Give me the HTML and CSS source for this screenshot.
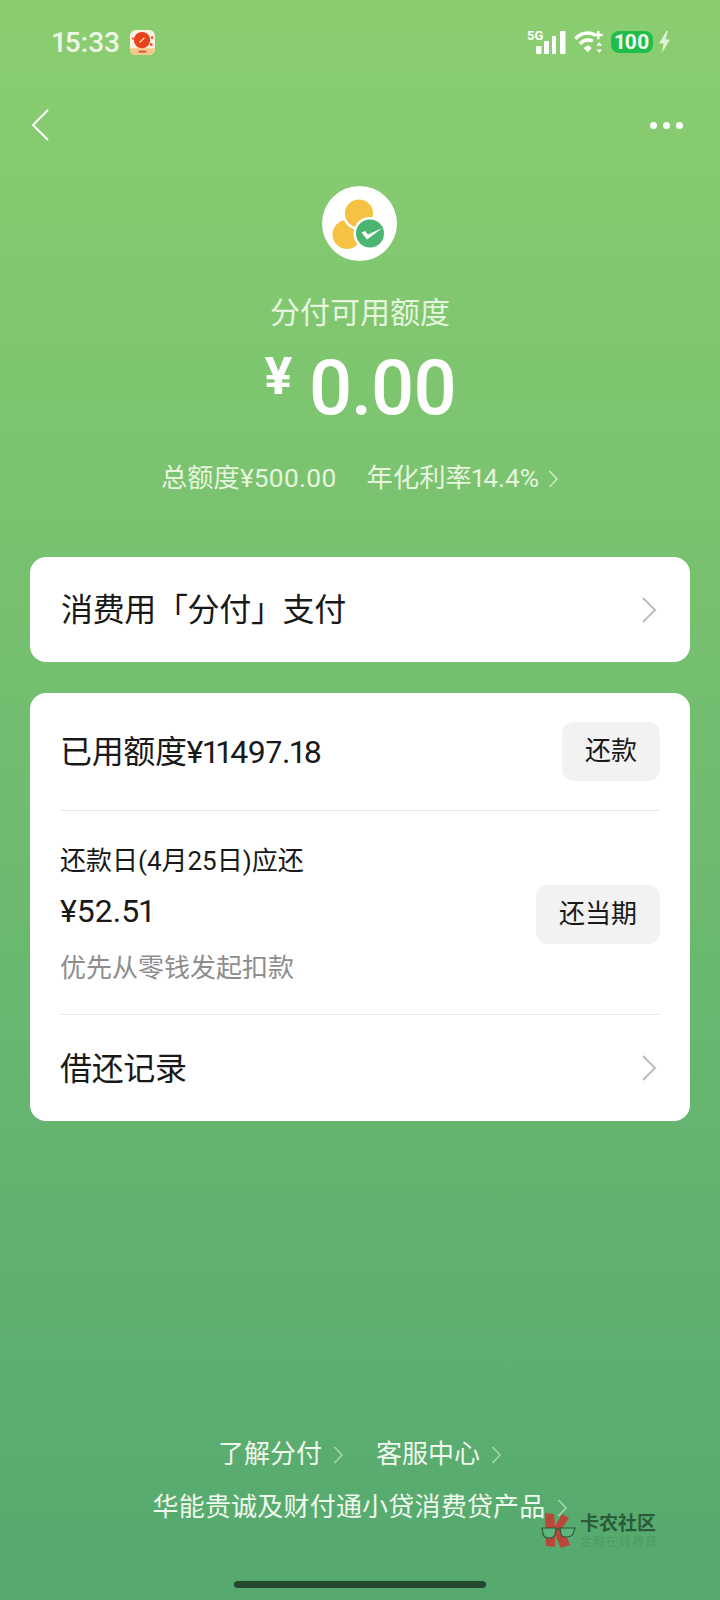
FILE: index.html
```html
<!DOCTYPE html>
<html lang="zh-CN">
<head>
    <meta charset="UTF-8">
    <meta name="viewport" content="width=device-width, initial-scale=1.0">
    <title>分付</title>
    <link rel="stylesheet" href="styles.css">
</head>

<body>
    <div class="page">
        <div class="statusbar">
            <div class="status-left">
                <span class="time">15:33</span>
                <svg class="appicon" width="25" height="25" viewBox="0 0 26 26">
                    <rect width="26" height="26" rx="6" fill="#fdf3e4"/>
                    <path d="M0 19h26v1a6 6 0 0 1-6 6H6a6 6 0 0 1-6-6z" fill="#f6c78c"/>
                    <circle cx="12.500" cy="10.500" r="8.500" fill="#e8431c"/>
                    <circle cx="3" cy="9" r="1.200" fill="#ea5a3a"/>
                    <circle cx="23" cy="8" r="1.400" fill="#ea5a3a"/>
                    <circle cx="22" cy="15" r="1.600" fill="#ea5a3a"/>
                    <path d="M10 13l5-5" stroke="#fbd9a0" stroke-width="1.400"/>
                    <rect x="9" y="21.500" width="8" height="2" fill="#d8562e"/>
                </svg>
            </div>
            <div class="status-right">
                <svg width="40" height="26" viewBox="0 0 40 26">
                    <text x="0" y="11" class="five-g">5G</text>
                    <rect x="9" y="17" width="5.500" height="8" rx="1" fill="#fff"/>
                    <rect x="17" y="12" width="5" height="13" rx="1" fill="#fff"/>
                    <rect x="25" y="7" width="4" height="18" rx="1" fill="#fff"/>
                    <rect x="33" y="2" width="5.500" height="23" rx="1" fill="#fff"/>
                </svg>
                <svg class="wifi" width="32" height="24" viewBox="0 0 34 26">
                    <path d="M1 9.500C8 2.500 16 2 23 5.500" fill="none" stroke="#fff" stroke-width="3.800"/>
                    <path d="M6 15c4-4 9-5 14-3" fill="none" stroke="#fff" stroke-width="3.800"/>
                    <path d="M10 19.500l5-3 4 3-4.500 4.500z" fill="#fff"/>
                    <path d="M26 1v9M21.500 5.500h9" stroke="#fff" stroke-width="2.800"/>
                    <path d="M27 13l3 4h-6zM27 25l3-4h-6z" fill="#fff"/>
                </svg>
                <span class="battery">100</span>
                <svg width="12" height="22" viewBox="0 0 12 22">
                    <path d="M7.500 0L0 12.500h4.500L3 22l8-13.500H6.500L9 0z" fill="#dff3d6"/>
                </svg>
            </div>
        </div>

        <div class="navbar">
            <svg width="20" height="32" viewBox="0 0 20 32">
                <path d="M18 1L3 16l15 15" fill="none" stroke="#fff" stroke-width="2"/>
            </svg>
            <div class="more"><i></i><i></i><i></i></div>
        </div>

        <div class="head">
            <svg class="logo" width="75" height="75" viewBox="0 0 75 75">
                <circle cx="37.500" cy="37.500" r="37.500" fill="#fff"/>
                <circle cx="25" cy="48.500" r="14.500" fill="#f6c244"/>
                <circle cx="37" cy="27.500" r="16.500" fill="#fff"/>
                <circle cx="37" cy="27.500" r="14" fill="#f6c244"/>
                <circle cx="48" cy="47.500" r="16.500" fill="#fff"/>
                <circle cx="48" cy="47.500" r="14" fill="#4cb56f"/>
                <path d="M39.500 46.500l5.500 7 15.500-11.500-14.500 6.500-3-3.500z" fill="#fff"/>
            </svg>
            <div class="head-title">分付可用额度</div>
            <div class="amount"><span class="yen">¥</span><span class="num">0.00</span></div>
            <div class="head-sub">
                <span>总额度¥500.00</span>
                <span class="rate">年化利率14.4%<svg width="11" height="20" viewBox="0 0 11 20"><path d="M1.500 2l7.500 8-7.500 8" fill="none" stroke="#cfeac4" stroke-width="1.500"/></svg></span>
            </div>
        </div>

        <div class="card pay-card">
            <span class="row-label">消费用「分付」支付</span>
            <svg class="row-arrow" width="16" height="28" viewBox="0 0 16 28"><path d="M2 2l12 12L2 26" fill="none" stroke="#bcbcbc" stroke-width="2"/></svg>
        </div>

        <div class="card main-card">
            <div class="used">
                <span class="row-label">已用额度¥11497.18</span>
                <span class="btn">还款</span>
            </div>
            <div class="due">
                <div>
                    <div class="due-title">还款日(4月25日)应还</div>
                    <div class="due-amount">¥52.51</div>
                    <div class="due-note">优先从零钱发起扣款</div>
                </div>
                <span class="btn">还当期</span>
            </div>
            <div class="records">
                <span class="row-label">借还记录</span>
                <svg class="row-arrow" width="16" height="28" viewBox="0 0 16 28"><path d="M2 2l12 12L2 26" fill="none" stroke="#bcbcbc" stroke-width="2"/></svg>
            </div>
        </div>

        <div class="footer">
            <div class="links">
                <span>了解分付<svg width="11" height="20" viewBox="0 0 11 20"><path d="M1.500 2l7.500 8-7.500 8" fill="none" stroke="#a8d8b0" stroke-width="1.500"/></svg></span>
                <span>客服中心<svg width="11" height="20" viewBox="0 0 11 20"><path d="M1.500 2l7.500 8-7.500 8" fill="none" stroke="#a8d8b0" stroke-width="1.500"/></svg></span>
            </div>
            <div class="links product">
                <span>华能贵诚及财付通小贷消费贷产品<svg width="11" height="20" viewBox="0 0 11 20"><path d="M1.500 2l7.500 8-7.500 8" fill="none" stroke="#a8d8b0" stroke-width="1.500"/></svg></span>
            </div>
        </div>
        <div class="homebar"></div>

        <div class="watermark">
            <svg width="36" height="36" viewBox="0 0 36 36">
                <path d="M4 0l9 1 1 12L21 1l7 4-6 9 7 18-9 3-6-13v12l-9-1z" fill="#b9473a"/>
                <path d="M1 15h14l-1 7q-1 3-6 3t-6-4zM19 15h15l-2 6q-2 3-7 3t-5-3z" fill="#5fb57b" stroke="#2f5a3d" stroke-width="1.200"/>
                <path d="M15 16h4" stroke="#2f5a3d" stroke-width="1.200"/>
            </svg>
            <div>
                <div class="wm-name">卡农社区</div>
                <div class="wm-sub">金融在线教育</div>
            </div>
        </div>
    </div>
</body>
</html>
```

FILE: styles.css
```css
* {
    box-sizing: border-box;
}
body {
    margin: 0;
    font-family: "Roboto", "Noto Sans CJK SC", sans-serif;
    font-variant-numeric: proportional-nums;
}
.page {
    position: relative;
    display: flex;
    flex-direction: column;
    width: 720px;
    height: 1600px;
    overflow: hidden;
    background: linear-gradient(#8bce70, #55a96f);
}

/* status bar */
.statusbar {
    display: flex;
    justify-content: space-between;
    align-items: center;
    height: 84px;
    padding: 0 49px 0 52px;
}
.status-left, .status-right {
    display: flex;
    align-items: center;
}
.time {
    font-size: 28px;
    font-weight: 500;
    color: #eef8e8;
}
.appicon {
    margin-left: 10px;
}
.five-g {
    font-family: "Roboto", sans-serif;
    font-size: 13px;
    font-weight: 700;
    fill: #fff;
}
.wifi {
    margin-left: 7px;
}
.battery {
    margin-left: 5px;
    margin-right: 6px;
    width: 42px;
    height: 22px;
    line-height: 22px;
    text-align: center;
    border-radius: 8px;
    background-color: #1fbe49;
    color: #f2fbee;
    font-size: 21px;
    font-weight: 700;
}

/* nav */
.navbar {
    display: flex;
    justify-content: space-between;
    align-items: center;
    height: 82px;
    padding: 0 37px 0 30px;
}
.more {
    display: flex;
    gap: 6px;
}
.more i {
    width: 7px;
    height: 7px;
    border-radius: 50%;
    background-color: #fff;
}

/* head */
.head {
    display: flex;
    flex-direction: column;
    align-items: center;
    padding-top: 20px;
    color: #fff;
}
.logo {
    display: block;
    margin-right: 1px;
}
.head-title {
    margin-top: 30px;
    font-size: 30px;
    line-height: 44px;
    color: #e6f5de;
}
.amount {
    display: flex;
    align-items: flex-start;
    height: 80px;
    margin-top: 13px;
}
.yen {
    margin-top: 1px;
    margin-right: 16px;
    font-size: 52px;
    line-height: 56px;
    font-weight: 700;
}
.num {
    font-size: 76px;
    line-height: 80px;
    font-weight: 500;
    letter-spacing: -2px;
}
.head-sub {
    display: flex;
    align-items: center;
    gap: 30px;
    margin-top: 32px;
    font-size: 26.300px;
    line-height: 36px;
    color: #e6f5de;
}
.rate svg {
    margin-left: 9px;
    vertical-align: -2px;
}

/* cards */
.card {
    margin: 0 30px;
    border-radius: 16px;
    background-color: #fff;
    color: #191919;
}
.pay-card {
    display: flex;
    justify-content: space-between;
    align-items: center;
    height: 105px;
    margin-top: 61px;
    padding: 0 33px 0 31px;
}
.main-card {
    height: 428px;
    margin-top: 31px;
    padding: 0 30px;
}
.row-label {
    margin-bottom: 5px;
    font-size: 32px;
    letter-spacing: -0.350px;
}
.used {
    display: flex;
    justify-content: space-between;
    align-items: center;
    height: 118px;
    border-bottom: 1px solid #e6e6e6;
}
.btn {
    padding: 0 23px;
    height: 59px;
    line-height: 59px;
    border-radius: 12px;
    background-color: #f2f2f2;
    font-size: 26px;
}
.due {
    display: flex;
    justify-content: space-between;
    align-items: center;
    height: 204px;
    padding-top: 3px;
    border-bottom: 1px solid #e6e6e6;
}
.due-title {
    font-size: 26px;
    line-height: 38px;
}
.due-amount {
    margin-top: 9px;
    font-size: 32px;
    line-height: 44px;
}
.due-note {
    margin-top: 16px;
    font-size: 26px;
    line-height: 38px;
    color: #8d8d8d;
}
.records {
    display: flex;
    justify-content: space-between;
    align-items: center;
    height: 106px;
    padding-right: 3px;
}

/* footer */
.footer {
    margin-top: auto;
    color: #eff8ec;
    font-size: 26px;
    line-height: 38px;
}
.links {
    display: flex;
    justify-content: center;
    gap: 32px;
    margin-bottom: 15px;
}
.links svg {
    margin-left: 11px;
    vertical-align: -2px;
}
.product {
    letter-spacing: 0.2px;
}
.homebar {
    width: 252px;
    height: 7px;
    margin: 40px auto 12px;
    border-radius: 4px;
    background-color: #24472e;
}

/* watermark sits over the footer */
.watermark {
    position: absolute;
    left: 541px;
    top: 1513px;
    display: flex;
    align-items: center;
    gap: 3px;
}
.wm-name {
    font-size: 19px;
    line-height: 22px;
    font-weight: 700;
    color: #2a5c3a;
}
.wm-sub {
    font-size: 12px;
    line-height: 14px;
    letter-spacing: 1px;
    color: #4c9a66;
}
```
